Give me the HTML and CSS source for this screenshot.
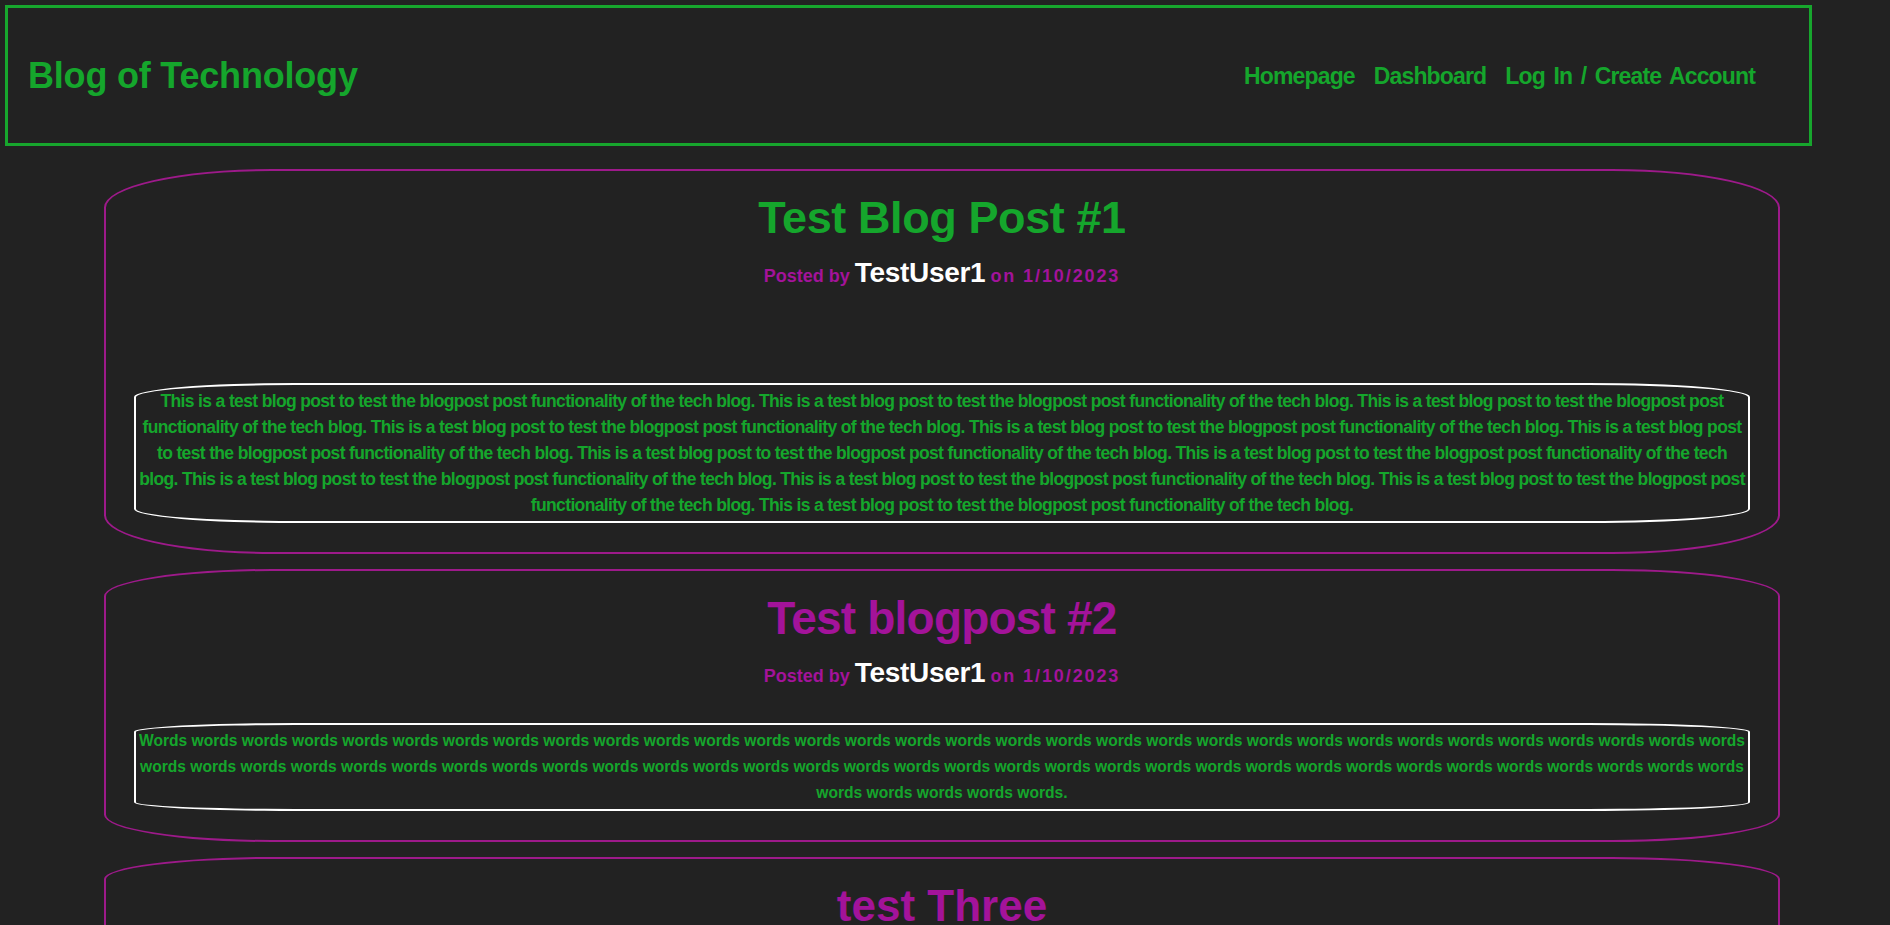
FILE: index.html
```html
<!DOCTYPE html>
<html lang="en">
<head>
<meta charset="utf-8">
<title>Blog of Technology</title>
<link rel="stylesheet" href="styles.css">
</head>
<body>
<header class="site-header">
  <h1 class="site-title">Blog of Technology</h1>
  <nav class="site-nav">
    <a href="#">Homepage</a>
    <a href="#">Dashboard</a>
    <a href="#">Log In / Create Account</a>
  </nav>
</header>
<main class="posts">
  <article class="post">
    <h2 class="post-title title-green">Test Blog Post #1</h2>
    <p class="post-meta">Posted by <span class="author">TestUser1</span> <span class="date">on 1/10/2023</span></p>
    <div class="post-gap"></div>
    <div class="post-body body-narrow">This is a test blog post to test the blogpost post functionality of the tech blog. This is a test blog post to test the blogpost post functionality of the tech blog. This is a test blog post to test the blogpost post functionality of the tech blog. This is a test blog post to test the blogpost post functionality of the tech blog. This is a test blog post to test the blogpost post functionality of the tech blog. This is a test blog post to test the blogpost post functionality of the tech blog. This is a test blog post to test the blogpost post functionality of the tech blog. This is a test blog post to test the blogpost post functionality of the tech blog. This is a test blog post to test the blogpost post functionality of the tech blog. This is a test blog post to test the blogpost post functionality of the tech blog. This is a test blog post to test the blogpost post functionality of the tech blog. This is a test blog post to test the blogpost post functionality of the tech blog.</div>
  </article>
  <article class="post">
    <h2 class="post-title title-narrow">Test blogpost #2</h2>
    <p class="post-meta">Posted by <span class="author">TestUser1</span> <span class="date">on 1/10/2023</span></p>
    <div class="post-body body-sans">Words words words words words words words words words words words words words words words words words words words words words words words words words words words words words words words words words words words words words words words words words words words words words words words words words words words words words words words words words words words words words words words words words words words words words.</div>
  </article>
  <article class="post">
    <h2 class="post-title title-wide">test Three</h2>
    <p class="post-meta">Posted by <span class="author">TestUser1</span> <span class="date">on 1/10/2023</span></p>
    <div class="post-body body-sans">Third test post.</div>
  </article>
</main>
</body>
</html>
```
FILE: styles.css
```css
html, body {
  margin: 0;
  padding: 0;
  background: #222222;
}

body {
  font-family: "Liberation Sans", Arial, sans-serif;
  color: #15a62c;
}

.site-header {
  box-sizing: border-box;
  width: 1807px;
  height: 141px;
  margin: 5px;
  border: 3px solid #17a62d;
  display: flex;
  align-items: center;
  justify-content: space-between;
  padding: 0 54px 0 20px;
}

.site-title {
  margin: 0;
  font-family: "Liberation Sans", Arial, sans-serif;
  font-weight: bold;
  font-size: 36px;
  letter-spacing: -0.2px;
  color: #15a62c;
}

.site-nav {
  display: flex;
  gap: 19px;
  padding-top: 1px;
}

.site-nav a {
  font-family: "Liberation Sans", Arial, sans-serif;
  font-weight: bold;
  font-size: 23px;
  letter-spacing: -0.85px;
  word-spacing: 3px;
  color: #15a62c;
  text-decoration: none;
}

.posts {
  display: flex;
  flex-direction: column;
  gap: 15px;
  margin: 23px 0 0 104px;
  width: 1676px;
}

.post {
  box-sizing: border-box;
  border: 2px solid #9d1a8a;
  border-radius: 10%;
  padding: 19px 28px 29px 28px;
  text-align: center;
}

.post-title {
  margin: 0;
  line-height: 56px;
  font-weight: bold;
  font-family: "Liberation Sans", Arial, sans-serif;
}

.title-green {
  font-size: 45px;
  letter-spacing: -0.4px;
  color: #15a62c;
}

.title-narrow {
  font-size: 46px;
  letter-spacing: -0.8px;
  color: #a3139a;
}

.title-wide {
  font-size: 44px;
  letter-spacing: 0;
  color: #a3139a;
}

.post-meta {
  margin: 12px 0 0 0;
  font-family: "Liberation Sans", Arial, sans-serif;
  font-weight: bold;
  font-size: 18px;
  line-height: 30px;
  color: #a3139a;
}

.author {
  font-size: 28px;
  color: #ffffff;
  letter-spacing: -0.3px;
}

.date {
  letter-spacing: 1.9px;
}

.post-gap {
  height: 60px;
}

.post-body {
  margin-top: 32px;
  border: 2px solid #ffffff;
  border-radius: 10%;
  padding: 3px 0;
  line-height: 26px;
  font-weight: bold;
  color: #15a62c;
  text-align: center;
}

.body-narrow {
  font-family: "Liberation Sans", Arial, sans-serif;
  font-size: 17.5px;
  letter-spacing: -0.65px;
}

.body-sans {
  font-family: "Liberation Sans", Arial, sans-serif;
  font-size: 15.6px;
}
```
